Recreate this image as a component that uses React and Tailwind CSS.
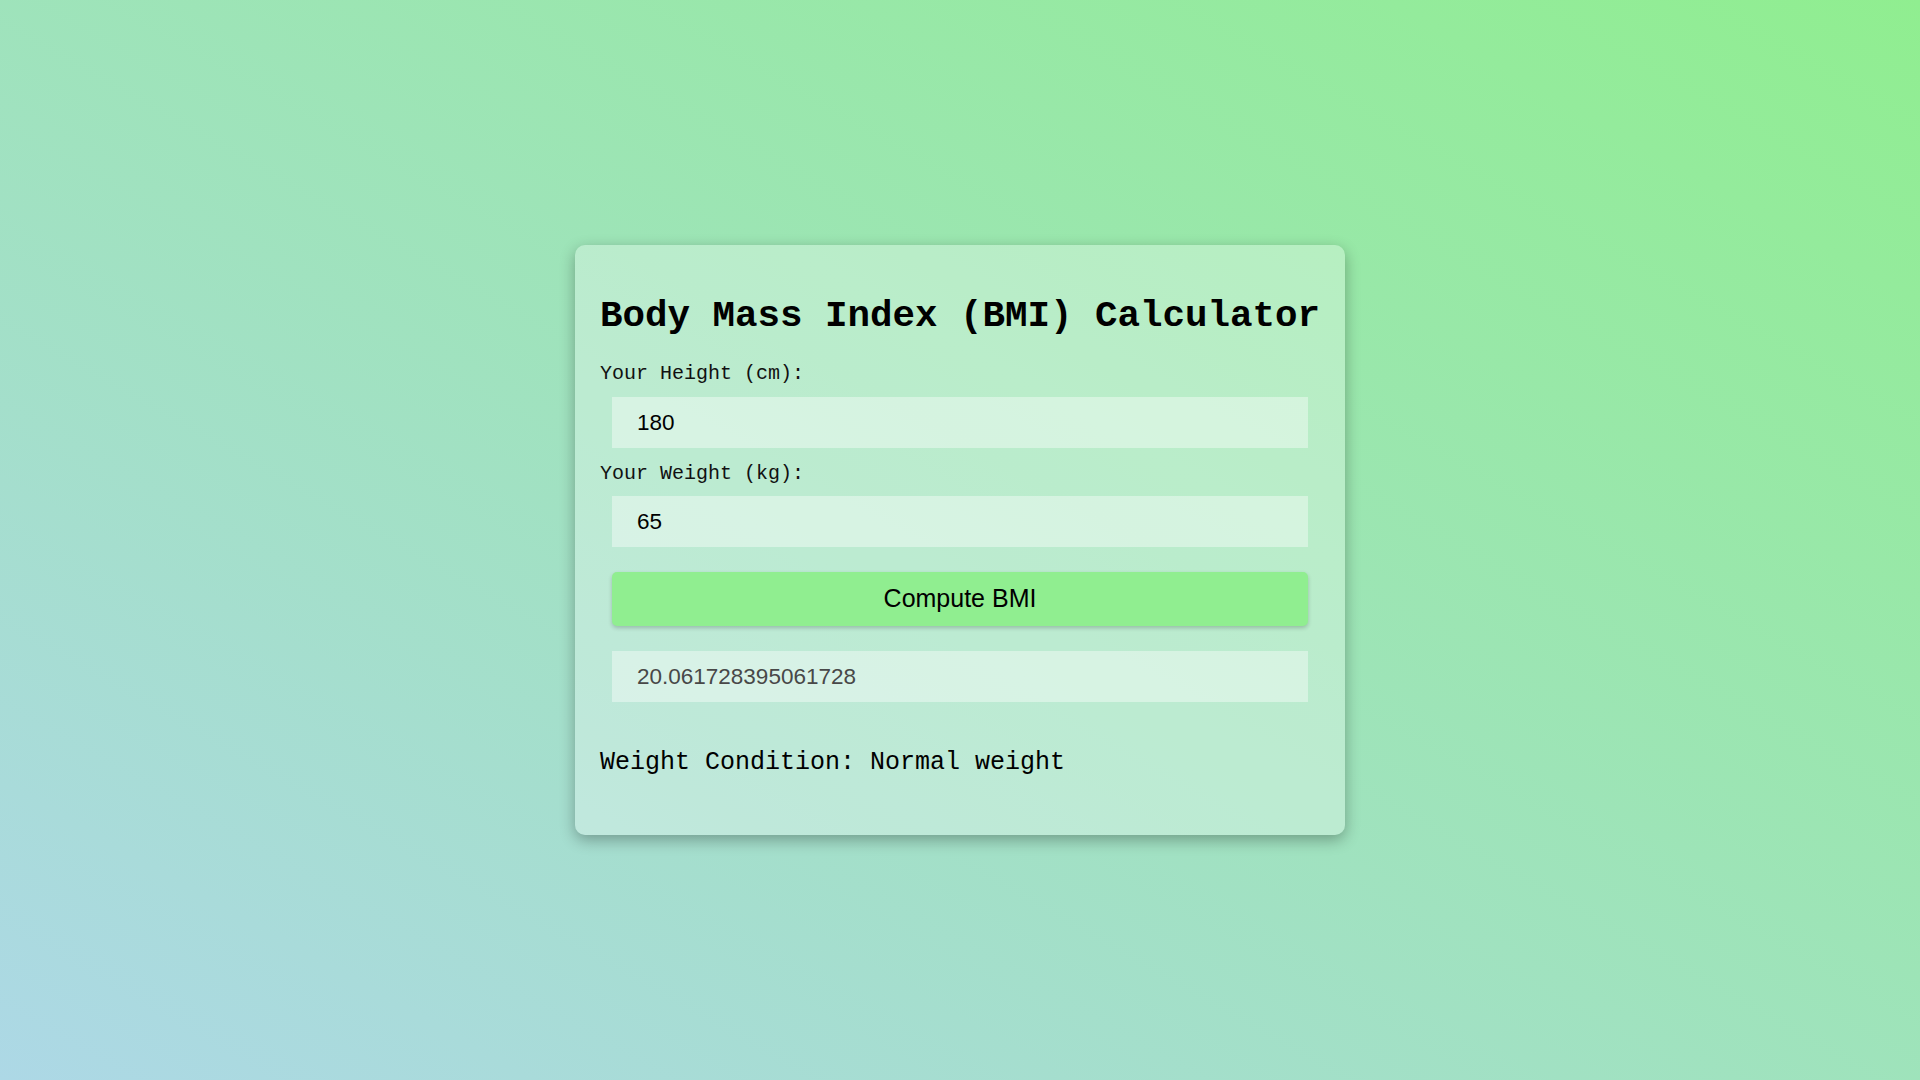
import { useState } from 'react';

const mono = "font-['Liberation_Mono','Courier_New',monospace]";
const sans = "font-['Liberation_Sans',Arial,sans-serif]";

function getCondition(bmi) {
  if (bmi < 18.5) return 'Underweight';
  if (bmi < 25) return 'Normal weight';
  if (bmi < 30) return 'Overweight';
  return 'Obesity';
}

export default function App() {
  const [height, setHeight] = useState('180');
  const [weight, setWeight] = useState('65');
  const [bmi, setBmi] = useState(65 / (1.8 * 1.8));

  function handleCompute() {
    const h = parseFloat(height) / 100;
    const w = parseFloat(weight);
    if (h > 0 && w > 0) setBmi(w / (h * h));
  }

  return (
    <div className="min-h-screen flex items-center justify-center bg-[linear-gradient(to_top_right,#add8e6,#90ee90)]">
      <div className="w-[770px] px-[25px] pt-[25px] pb-[58px] rounded-[10px] bg-white/30 shadow-[0_5px_15px_rgba(0,0,0,0.3)] flex flex-col">
        <h1 className={`${mono} mt-[25px] text-[37.5px] leading-[43px] font-bold text-black whitespace-nowrap`}>
          Body Mass Index (BMI) Calculator
        </h1>

        <label className={`${mono} mt-[24px] text-[20px] leading-[23px] text-[#111]`}>Your Height (cm):</label>
        <input
          type="text"
          value={height}
          onChange={(e) => setHeight(e.target.value)}
          className={`${sans} mt-[12px] mx-[12px] h-[51px] px-[25px] text-[22.5px] text-black bg-white/40 outline-none`}
        />

        <label className={`${mono} mt-[14px] text-[20px] leading-[23px] text-[#111]`}>Your Weight (kg):</label>
        <input
          type="text"
          value={weight}
          onChange={(e) => setWeight(e.target.value)}
          className={`${sans} mt-[11px] mx-[12px] h-[51px] px-[25px] text-[22.5px] text-black bg-white/40 outline-none`}
        />

        <button
          type="button"
          onClick={handleCompute}
          className={`${sans} mt-[25px] mx-[12px] h-[54px] rounded-[5px] bg-[#90ee90] text-[25px] text-black shadow-[0_2px_4px_rgba(0,0,0,0.2)]`}
        >
          Compute BMI
        </button>

        <input
          type="text"
          readOnly
          value={String(bmi)}
          className={`${sans} mt-[25px] mx-[12px] h-[51px] px-[25px] text-[22.5px] text-[#484848] bg-white/40 outline-none`}
        />

        <p className={`${mono} mt-[47px] text-[25px] leading-[28px] text-black`}>
          Weight Condition: {getCondition(bmi)}
        </p>
      </div>
    </div>
  );
}
